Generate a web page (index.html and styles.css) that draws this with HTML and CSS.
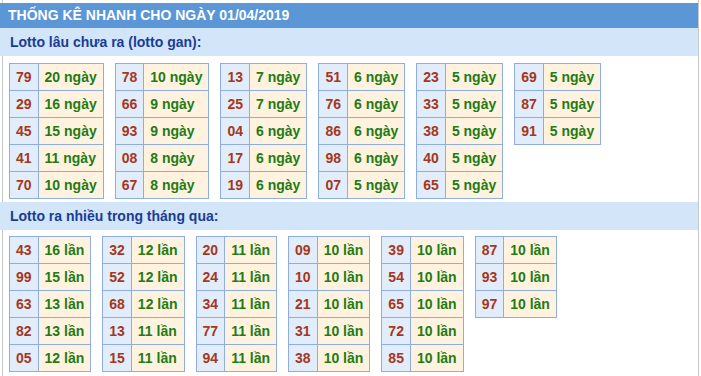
FILE: index.html
```html
<!DOCTYPE html>
<html lang="vi">
<head>
<meta charset="utf-8">
<link rel="stylesheet" href="styles.css">
</head>
<body>
<div class="wrap">
  <div class="head">THỐNG KÊ NHANH CHO NGÀY 01/04/2019</div>
  <div class="sec-title">Lotto lâu chưa ra (lotto gan):</div>
  <div class="grid g1">
    <table><tr><td class="n">79</td><td class="v">20 ngày</td></tr><tr><td class="n">29</td><td class="v">16 ngày</td></tr><tr><td class="n">45</td><td class="v">15 ngày</td></tr><tr><td class="n">41</td><td class="v">11 ngày</td></tr><tr><td class="n">70</td><td class="v">10 ngày</td></tr></table>
    <table><tr><td class="n">78</td><td class="v">10 ngày</td></tr><tr><td class="n">66</td><td class="v">9 ngày</td></tr><tr><td class="n">93</td><td class="v">9 ngày</td></tr><tr><td class="n">08</td><td class="v">8 ngày</td></tr><tr><td class="n">67</td><td class="v">8 ngày</td></tr></table>
    <table><tr><td class="n">13</td><td class="v">7 ngày</td></tr><tr><td class="n">25</td><td class="v">7 ngày</td></tr><tr><td class="n">04</td><td class="v">6 ngày</td></tr><tr><td class="n">17</td><td class="v">6 ngày</td></tr><tr><td class="n">19</td><td class="v">6 ngày</td></tr></table>
    <table><tr><td class="n">51</td><td class="v">6 ngày</td></tr><tr><td class="n">76</td><td class="v">6 ngày</td></tr><tr><td class="n">86</td><td class="v">6 ngày</td></tr><tr><td class="n">98</td><td class="v">6 ngày</td></tr><tr><td class="n">07</td><td class="v">5 ngày</td></tr></table>
    <table><tr><td class="n">23</td><td class="v">5 ngày</td></tr><tr><td class="n">33</td><td class="v">5 ngày</td></tr><tr><td class="n">38</td><td class="v">5 ngày</td></tr><tr><td class="n">40</td><td class="v">5 ngày</td></tr><tr><td class="n">65</td><td class="v">5 ngày</td></tr></table>
    <table><tr><td class="n">69</td><td class="v">5 ngày</td></tr><tr><td class="n">87</td><td class="v">5 ngày</td></tr><tr><td class="n">91</td><td class="v">5 ngày</td></tr></table>
  </div>
  <div class="sec-title">Lotto ra nhiều trong tháng qua:</div>
  <div class="grid g2">
    <table><tr><td class="n">43</td><td class="v">16 lần</td></tr><tr><td class="n">99</td><td class="v">15 lần</td></tr><tr><td class="n">63</td><td class="v">13 lần</td></tr><tr><td class="n">82</td><td class="v">13 lần</td></tr><tr><td class="n">05</td><td class="v">12 lần</td></tr></table>
    <table><tr><td class="n">32</td><td class="v">12 lần</td></tr><tr><td class="n">52</td><td class="v">12 lần</td></tr><tr><td class="n">68</td><td class="v">12 lần</td></tr><tr><td class="n">13</td><td class="v">11 lần</td></tr><tr><td class="n">15</td><td class="v">11 lần</td></tr></table>
    <table><tr><td class="n">20</td><td class="v">11 lần</td></tr><tr><td class="n">24</td><td class="v">11 lần</td></tr><tr><td class="n">34</td><td class="v">11 lần</td></tr><tr><td class="n">77</td><td class="v">11 lần</td></tr><tr><td class="n">94</td><td class="v">11 lần</td></tr></table>
    <table><tr><td class="n">09</td><td class="v">10 lần</td></tr><tr><td class="n">10</td><td class="v">10 lần</td></tr><tr><td class="n">21</td><td class="v">10 lần</td></tr><tr><td class="n">31</td><td class="v">10 lần</td></tr><tr><td class="n">38</td><td class="v">10 lần</td></tr></table>
    <table><tr><td class="n">39</td><td class="v">10 lần</td></tr><tr><td class="n">54</td><td class="v">10 lần</td></tr><tr><td class="n">65</td><td class="v">10 lần</td></tr><tr><td class="n">72</td><td class="v">10 lần</td></tr><tr><td class="n">85</td><td class="v">10 lần</td></tr></table>
    <table><tr><td class="n">87</td><td class="v">10 lần</td></tr><tr><td class="n">93</td><td class="v">10 lần</td></tr><tr><td class="n">97</td><td class="v">10 lần</td></tr></table>
  </div>
</div>
</body>
</html>
```
FILE: styles.css
```css
html, body {
  margin: 0;
  padding: 0;
  background: #ffffff;
}
body {
  font-family: "Liberation Sans", Arial, sans-serif;
  font-weight: bold;
}
.wrap {
  width: 698px;
  padding-top: 3px;
  border-right: 1px solid #c9c9c9;
  min-height: 373px;
  background: linear-gradient(#c9c9c9, #c9c9c9) 2px 0 / 1px 100% no-repeat;
}
.head {
  background: #5b96d6;
  color: #ffffff;
  font-size: 14px;
  height: 25px;
  line-height: 25px;
  padding-left: 8px;
}
.sec-title {
  background: #d3e6f9;
  color: #1a3c96;
  font-size: 14px;
  height: 28px;
  line-height: 28px;
  padding-left: 10px;
}
.grid {
  display: flex;
  align-items: flex-start;
  gap: 11px;
  padding-left: 9px;
}
.g1 {
  padding-top: 7px;
  padding-bottom: 3px;
}
.g2 {
  padding-top: 6px;
}
table {
  border-collapse: collapse;
  font-size: 14px;
}
td {
  border: 1px solid #8fade0;
  height: 27px;
  padding: 0 6px;
  box-sizing: border-box;
  white-space: nowrap;
}
td.n {
  background: #e2edfb;
  color: #a5371c;
}
td.v {
  background: #fff3e0;
  color: #237b14;
}
```
